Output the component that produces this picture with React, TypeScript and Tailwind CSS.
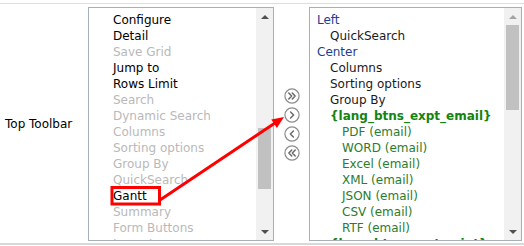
import React from "react";

type Item = { label: string; tone: "on" | "off" };

const available: Item[] = [
  { label: "Configure", tone: "on" },
  { label: "Detail", tone: "on" },
  { label: "Save Grid", tone: "off" },
  { label: "Jump to", tone: "on" },
  { label: "Rows Limit", tone: "on" },
  { label: "Search", tone: "off" },
  { label: "Dynamic Search", tone: "off" },
  { label: "Columns", tone: "off" },
  { label: "Sorting options", tone: "off" },
  { label: "Group By", tone: "off" },
  { label: "QuickSearch", tone: "off" },
  { label: "Gantt", tone: "on" },
  { label: "Summary", tone: "off" },
  { label: "Form Buttons", tone: "off" },
  { label: "Layout", tone: "off" },
];

type Sel = { label: string; level: 0 | 1 | 2; kind: "group" | "item" | "sub" | "export" };

const selected: Sel[] = [
  { label: "Left", level: 0, kind: "group" },
  { label: "QuickSearch", level: 1, kind: "item" },
  { label: "Center", level: 0, kind: "group" },
  { label: "Columns", level: 1, kind: "item" },
  { label: "Sorting options", level: 1, kind: "item" },
  { label: "Group By", level: 1, kind: "item" },
  { label: "{lang_btns_expt_email}", level: 1, kind: "sub" },
  { label: "PDF (email)", level: 2, kind: "export" },
  { label: "WORD (email)", level: 2, kind: "export" },
  { label: "Excel (email)", level: 2, kind: "export" },
  { label: "XML (email)", level: 2, kind: "export" },
  { label: "JSON (email)", level: 2, kind: "export" },
  { label: "CSV (email)", level: 2, kind: "export" },
  { label: "RTF (email)", level: 2, kind: "export" },
  { label: "{lang_btns_expt_print}", level: 1, kind: "sub" },
];

const selClass: Record<Sel["kind"], string> = {
  group: "text-[#1c3d8f]",
  item: "text-[#1a1a1a]",
  sub: "text-[#138313] font-bold",
  export: "text-[#2c7c2c]",
};

const padClass = ["pl-[7px]", "pl-[20px]", "pl-[32px]"];

function Scrollbar({
  thumbTop,
  thumbHeight,
  atTop,
}: {
  thumbTop: string;
  thumbHeight: string;
  atTop?: boolean;
}) {
  return (
    <div className="w-[17px] h-full bg-[#f1f1f1] flex flex-col shrink-0">
      <div className="h-[17px] flex items-center justify-center">
        <div
          className={`w-0 h-0 border-x-[4px] border-x-transparent border-b-[4px] ${
            atTop ? "border-b-[#a3a3a3]" : "border-b-[#505050]"
          }`}
        />
      </div>
      <div className="flex-1 flex flex-col">
        <div className={thumbTop} />
        <div className={`${thumbHeight} mx-[2px] bg-[#c1c1c1]`} />
      </div>
      <div className="h-[17px] flex items-center justify-center">
        <div className="w-0 h-0 border-x-[4px] border-x-transparent border-t-[4px] border-t-[#505050]" />
      </div>
    </div>
  );
}

function MoveButton({ dir, double }: { dir: "right" | "left"; double?: boolean }) {
  let d = "";
  if (dir === "right") d = double ? "M4.8 5 L7.6 8 L4.8 11 M8.3 5 L11.1 8 L8.3 11" : "M6.6 5 L9.6 8 L6.6 11";
  else d = double ? "M7.7 5 L4.9 8 L7.7 11 M11.2 5 L8.4 8 L11.2 11" : "M9.4 5 L6.4 8 L9.4 11";
  return (
    <button className="w-[16px] h-[16px] block">
      <svg width="16" height="16" viewBox="0 0 16 16">
        <circle cx="8" cy="8" r="7.1" fill="white" stroke="#8c8c8c" strokeWidth="1.2" />
        <path d={d} fill="none" stroke="#6e6e6e" strokeWidth="1.6" strokeLinecap="round" strokeLinejoin="round" />
      </svg>
    </button>
  );
}

export default function App() {
  return (
    <div className="relative w-[524px] h-[246px] bg-white overflow-hidden font-['DejaVu_Sans',sans-serif] text-[12px] leading-[16px]">
      <div className="mt-[3px] border-t border-[#dedede] border-b-2 border-b-[#d8d8d8] pt-[3px] pb-[2px] flex items-center">
        {/* label cell */}
        <div className="w-[88px] pl-[5px] text-black">Top Toolbar</div>

        {/* available buttons */}
        <div className="w-[186px] h-[234px] border border-[#a7afba] flex overflow-hidden">
          <div className="flex-1 pt-[4px] pl-[24px] overflow-hidden">
            {available.map((it) => (
              <div
                key={it.label}
                className={`h-[16px] whitespace-nowrap ${it.tone === "on" ? "text-black" : "text-[#b9b9b9]"}`}
              >
                {it.label}
              </div>
            ))}
          </div>
          <Scrollbar thumbTop="h-[103px]" thumbHeight="h-[61px]" />
        </div>

        {/* move buttons */}
        <div className="w-[35px] flex flex-col items-center gap-[3px] pl-[1px]">
          <MoveButton dir="right" double />
          <MoveButton dir="right" />
          <MoveButton dir="left" />
          <MoveButton dir="left" double />
        </div>

        {/* selected buttons */}
        <div className="w-[213px] h-[234px] border border-[#a7afba] flex overflow-hidden">
          <div className="flex-1 pt-[4px] overflow-hidden">
            {selected.map((it, i) => (
              <div key={i} className={`h-[16px] whitespace-nowrap ${padClass[it.level]} ${selClass[it.kind]}`}>
                {it.label}
              </div>
            ))}
          </div>
          <Scrollbar thumbTop="h-[0px]" thumbHeight="h-[85px]" atTop />
        </div>
      </div>

      {/* annotation */}
      <svg className="absolute left-0 top-0 pointer-events-none" width="524" height="246">
        <rect x="112" y="187.5" width="47.5" height="16.5" fill="none" stroke="#ff0000" strokeWidth="3" />
        <line x1="160" y1="200" x2="275" y2="123" stroke="#ff0000" strokeWidth="3" />
        <polygon points="284,117 271.3,119.6 276.9,127.9" fill="#ff0000" />
      </svg>
    </div>
  );
}
